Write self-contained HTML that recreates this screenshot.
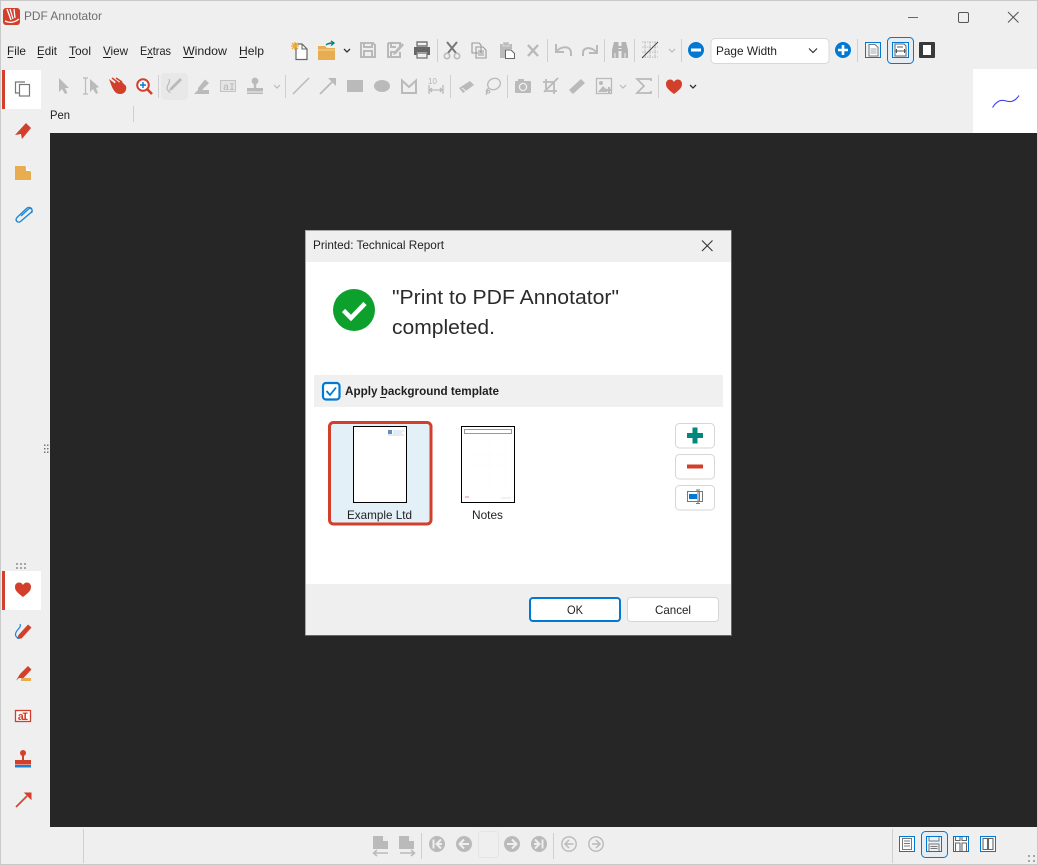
<!DOCTYPE html>
<html lang="en"><head><meta charset="utf-8"><title>PDF Annotator</title>
<style>
html,body{margin:0;padding:0;background:#efefef;width:1038px;height:865px;overflow:hidden}
svg{display:block}
text{font-family:"Liberation Sans",sans-serif;fill:#1f1f1f;font-size:12px}
</style></head><body>
<svg width="1038" height="865" viewBox="0 0 1038 865" xmlns="http://www.w3.org/2000/svg">
<rect width="1038" height="865" fill="#efefef"/>
<path d="M.5 865V.5H1037.500V865" fill="none" stroke="#c9c9c9"/>
<path d="M0 864.500H1038" stroke="#c9c9c9"/>
<rect x="50" y="133" width="987" height="694" fill="#262626"/>
<rect x="973" y="69" width="64" height="64" fill="#fff"/>
<path d="M992.500 107.500C996 102 1000 99.500 1004 100.500C1009 102 1014 103 1019 95.500" fill="none" stroke="#3a3af0" stroke-width="1.100"/>

<!-- title bar -->
<rect x="3" y="8" width="17" height="17" rx="3" fill="#d23f2b"/>
<path d="M7 9L11 20M10 9L13 19M14 9L15 18M5 21C9 23 14 23 19 19" fill="none" stroke="#fff" stroke-width="1.300"/>
<text x="24" y="20" textLength="78" lengthAdjust="spacingAndGlyphs" style="fill:#6e6e6e">PDF Annotator</text>
<path d="M908 17.500H918" stroke="#666"/>
<rect x="958.500" y="12.500" width="10" height="10" rx="1.500" fill="none" stroke="#555"/>
<path d="M1008 12L1018.500 22.500M1018.500 12L1008 22.500" stroke="#555"/>

<!-- menu -->
<g font-size="12">
<text x="7" y="55" textLength="19" lengthAdjust="spacingAndGlyphs">File</text>
<text x="37" y="55" textLength="20" lengthAdjust="spacingAndGlyphs">Edit</text>
<text x="69" y="55" textLength="22" lengthAdjust="spacingAndGlyphs">Tool</text>
<text x="103" y="55" textLength="25" lengthAdjust="spacingAndGlyphs">View</text>
<text x="140" y="55" textLength="31" lengthAdjust="spacingAndGlyphs">Extras</text>
<text x="183" y="55" textLength="44" lengthAdjust="spacingAndGlyphs">Window</text>
<text x="239" y="55" textLength="25" lengthAdjust="spacingAndGlyphs">Help</text>
</g>
<path d="M7.500 57.500H13M37.500 57.500H43M69 57.500H75M103 57.500H111M147 57.500H153M183 57.500H194M239.500 57.500H247" stroke="#1f1f1f"/>

<!-- separators -->
<path d="M437.500 39V62M547.500 39V62M604.500 39V62M634.500 39V62M681.500 39V62M857.500 39V62M158.500 75V98M285.500 75V98M450.500 75V98M507.500 75V98M658.500 75V98M133.500 106V122M83.500 829V863M421.500 833V859M553.500 833V859M892.500 829V863" stroke="#cfcfcf"/>

<!-- row 1 icons -->
<path d="M296 44H302L307 49V59.500H296Z" fill="#fff" stroke="#666" stroke-width="1.200"/>
<path d="M302 44V49H307" fill="none" stroke="#666"/>
<path d="M295 42V50M291 46H299M292 43L298 49M298 43L292 49" stroke="#f0a830" stroke-width="1.300"/>
<path d="M318 46H325L327 48H335V60H318Z" fill="#e8ad50"/>
<path d="M318 50H335" stroke="#f6d49a"/>
<path d="M326 45C328 43 331 43 334 43M331 41L334 43L331 45.500" fill="none" stroke="#00897b" stroke-width="1.400"/>
<path d="M344 49L347 52L350 49" fill="none" stroke="#333" stroke-width="1.300"/>
<g fill="none" stroke="#b9b9b9" stroke-width="2">
<path d="M361 43H373L375 45V57H361Z"/>
<path d="M364 43V47H372V43M364 57V51H372V57"/>
<path d="M388 43H400V46M388 43V57H400V52"/>
<path d="M391 43V47H396M391 57V52H395"/>
</g>
<path d="M394 52L402 43L404 45L396 54L393 55Z" fill="#b9b9b9"/>
<path d="M417 42H427V46H417Z" fill="none" stroke="#777" stroke-width="1.400"/>
<path d="M414 47H430V55H427V52H417V55H414Z" fill="#666"/>
<rect x="417" y="53" width="10" height="5" fill="none" stroke="#777" stroke-width="1.300"/>
<path d="M447 42L456 53M457 42L448 53" stroke="#777" stroke-width="2"/>
<circle cx="447" cy="56" r="2.700" fill="none" stroke="#b9b9b9" stroke-width="1.600"/><circle cx="457" cy="56" r="2.700" fill="none" stroke="#b9b9b9" stroke-width="1.600"/>
<path d="M472 43H479L481 45V53H472ZM476 47H483L486 50V58H476Z" fill="#efefef" stroke="#999" stroke-width="1.100"/>
<path d="M478 51H484M478 53H484M478 55H484" stroke="#999"/>
<path d="M500 44H512V49H505V58H500Z" fill="#bbb"/><rect x="503" y="42" width="6" height="4" fill="#bbb" stroke="#efefef" stroke-width=".6"/>
<path d="M505.500 50H511L514.500 53.500V58.500H505.500Z" fill="#fff" stroke="#666"/>
<path d="M528 45L538 56M538 45L528 56" stroke="#b9b9b9" stroke-width="2.400"/>
<path d="M556 44V52H564M556 52C560 46 571 45 571 53V56" fill="none" stroke="#b9b9b9" stroke-width="2"/>
<path d="M597 45V53H589M597 53C593 47 583 46 583 53V56" fill="none" stroke="#b9b9b9" stroke-width="2"/>
<path d="M612 58V50L614 42H618.500V58H613ZM621.500 58V42H626L628 50V58Z" fill="#b2b2b2"/>
<path d="M615 50H625M618 47H622" stroke="#b2b2b2" stroke-width="2"/>
<path d="M615 58V53M625 58V53" stroke="#efefef"/>
<path d="M642 42H658M642 47H658M642 52H658M642 57H658M645 42V58M650 42V58M655 42V58" stroke="#aaa" stroke-width=".8" stroke-dasharray="1.500 1"/>
<path d="M642 58L658 42" stroke="#444" stroke-width="1"/>
<path d="M669 49L672 52L675 49" fill="none" stroke="#bbb" stroke-width="1.200"/>
<circle cx="696" cy="50" r="8" fill="#0078d4"/><rect x="691" y="48.500" width="10" height="3" fill="#fff"/>
<rect x="711" y="38.500" width="118" height="25" rx="4" fill="#fff" stroke="#d8d8d8"/>
<text x="716" y="55" textLength="61" lengthAdjust="spacingAndGlyphs">Page Width</text>
<path d="M809 48.500L813 52.500L817 48.500" fill="none" stroke="#333" stroke-width="1.200"/>
<circle cx="843" cy="50" r="8" fill="#0078d4"/><path d="M838 50H848M843 45V55" stroke="#fff" stroke-width="2.600"/>
<rect x="865.500" y="42.500" width="15" height="15" fill="#e9f2f9" stroke="#0078d4"/>
<path d="M869 44.500H875L878 47.500V56H869Z" fill="#fff" stroke="#777"/><path d="M870.500 49H876.500M870.500 51H876.500M870.500 53H876.500" stroke="#888" stroke-width=".8"/>
<rect x="887.500" y="37.500" width="26" height="26" rx="4" fill="#e6ecf1" stroke="#0078d4"/>
<rect x="892.500" y="42.500" width="16" height="15" fill="#e9f2f9" stroke="#0078d4"/>
<path d="M895 44H904L906 46V56H895Z" fill="#fff" stroke="#666"/><path d="M895 51H906M896.500 49V53M904.500 49V53M897 47H903" stroke="#555" stroke-width="1"/>
<rect x="919" y="42" width="16" height="16" rx="1" fill="#3a3a3a"/><rect x="923" y="45" width="8" height="10" fill="#fff"/>

<!-- row 2 icons -->
<path d="M59 78L59 92L62 89L65 94L67.500 93L65 88H69Z" fill="#bababa"/>
<path d="M83 78H88M83 94H88M85.500 78V94" stroke="#bababa" stroke-width="1.200"/>
<path d="M90 79V92L93 89L96 94L98 93L96 88L99 87Z" fill="#bababa"/>
<path d="M109 79L115 83.500L116 80.500L119 82.500L121 81L126 86C127 90 125 94 120 94C116 94 114 91 112 87Z" fill="#d23f2b"/>
<path d="M112 78L118 82.500M116 78L122 82" stroke="#d23f2b" stroke-width="1.500"/>
<circle cx="143" cy="85" r="5.800" fill="#fff" stroke="#d23f2b" stroke-width="2"/>
<path d="M147.500 89.500L152 94" stroke="#d23f2b" stroke-width="2.600"/>
<path d="M140 85H146M143 82V88" stroke="#0078d4" stroke-width="1.400"/>
<rect x="161" y="73" width="27" height="27" rx="4" fill="#e8e8e8"/>
<path d="M170 88L180 78L182 80L172 90L169 91Z" fill="#bababa"/>
<path d="M169 79C171 82 167 85 167 88C167 91 170 92 170 93" fill="none" stroke="#bababa" stroke-width="1.200"/>
<path d="M198 88L205 79.500L209 83L202 90H198Z" fill="#bababa"/><path d="M194 94L198 90H209V94Z" fill="#bababa"/>
<rect x="220.500" y="80.500" width="15" height="11" fill="#e4e4e4" stroke="#c4c4c4"/>
<text x="223" y="90" style="fill:#b4b4b4;font-size:10px;font-family:'Liberation Mono',monospace">aI</text>
<circle cx="255" cy="81" r="3.400" fill="#bababa"/><path d="M255 84V88" stroke="#bababa" stroke-width="2.400"/>
<rect x="247" y="88" width="16" height="3.500" fill="#bababa"/><rect x="247" y="92.500" width="16" height="1.500" fill="#bababa"/>
<path d="M274 85L277 88L280 85" fill="none" stroke="#bbb" stroke-width="1.200"/>
<path d="M293 94L309 78" stroke="#bababa" stroke-width="1.500"/>
<path d="M320 94L333 81" stroke="#bababa" stroke-width="1.800"/><path d="M328 78H336V86Z" fill="#bababa"/>
<rect x="347" y="80" width="16" height="12" fill="#bababa"/>
<ellipse cx="382" cy="86" rx="8" ry="6" fill="#bababa"/>
<path d="M402 93V80.500L409 87L416 80.500V93Z" fill="none" stroke="#bababa" stroke-width="2"/>
<text x="428" y="84" style="fill:#b4b4b4;font-size:8px" textLength="9">10</text>
<path d="M429 85V94M443 85V94M430 90H442M432 88L430 90L432 92M440 88L442 90L440 92" fill="none" stroke="#bababa" stroke-width="1.300"/>
<path d="M459 88L470 81L474 85L463 93Z" fill="#bababa"/>
<path d="M462 88L467 92" stroke="#efefef"/>
<ellipse cx="494" cy="84" rx="6.500" ry="5.500" transform="rotate(-25 494 84)" fill="none" stroke="#bababa" stroke-width="1.300"/>
<path d="M489 88C485 90 486 93 488 93C490 93 491 91 488 90L486 95" fill="none" stroke="#bababa" stroke-width="1.200"/>
<rect x="515" y="81" width="16" height="12" rx="1" fill="#bababa"/><rect x="518" y="79" width="6" height="3" fill="#bababa"/>
<circle cx="523" cy="87" r="3.600" fill="#bababa" stroke="#efefef" stroke-width="1.300"/>
<path d="M546 79V91H557M543 82H554V94M544 92L558 78" fill="none" stroke="#bababa" stroke-width="1.800"/>
<path d="M569 90L581 79L585 83L573 94Z" fill="#bababa"/>
<rect x="596.500" y="78.500" width="15" height="15" fill="none" stroke="#bababa" stroke-width="1.300"/>
<circle cx="601" cy="83" r="2" fill="#bababa"/><path d="M598 92L603 86L607 90V92Z" fill="#bababa"/>
<path d="M606 90H612M609 87V93" stroke="#bababa" stroke-width="2.200"/>
<path d="M620 85L623 88L626 85" fill="none" stroke="#bbb" stroke-width="1.200"/>
<path d="M651 81V79H637L644 86L637 93H651V91" fill="none" stroke="#bababa" stroke-width="1.700"/>
<path d="M674 94C669 90 666 88 666 84C666 79 672 78 674 82C676 78 682 79 682 84C682 88 679 90 674 94Z" fill="#d23f2b"/>
<path d="M690 85L693 88L696 85" fill="none" stroke="#333" stroke-width="1.300"/>
<text x="50" y="119" textLength="20" lengthAdjust="spacingAndGlyphs">Pen</text>

<!-- left tabs -->
<rect x="2" y="70" width="39" height="39" fill="#fff"/><rect x="2" y="70" width="3" height="39" fill="#d23f2b"/>
<path d="M25 82H15.500V93H19" fill="none" stroke="#777" stroke-width="1.200"/>
<rect x="19.500" y="84.500" width="10" height="11.500" fill="#fff" stroke="#777" stroke-width="1.200"/>
<path d="M15 135L26 123L31 128L22 139L21 134Z" fill="#d23f2b"/>
<path d="M15 166H25L31 172V180H15Z" fill="#e8ad50"/><path d="M26 166.500V171H30.500Z" fill="#fff"/>
<path d="M21 216L28.500 209C31 207 33.500 210 31 212.500L20.500 221.500C18 223.500 14.500 220.500 17 217.500L26.500 208.500C29.500 205.500 34 209 31.500 213" fill="none" stroke="#1b84d6" stroke-width="1.300"/>
<path d="M44 444.500h1.500v1.500H44zM47 444.500h1.500v1.500H47zM44 448h1.500v1.500H44zM47 448h1.500v1.500H47zM44 451.500h1.500v1.500H44zM47 451.500h1.500v1.500H47z" fill="#777"/>
<path d="M16 563h2v2h-2zM20 563h2v2h-2zM24 563h2v2h-2zM16 567h2v2h-2zM20 567h2v2h-2zM24 567h2v2h-2z" fill="#a5a5a5"/>
<rect x="2" y="571" width="39" height="39" fill="#fff"/><rect x="2" y="571" width="3" height="39" fill="#d23f2b"/>
<path d="M23 597C18 593 15 591 15 587C15 582 21 581 23 585C25 581 31 582 31 587C31 591 28 593 23 597Z" fill="#d23f2b"/>
<path d="M18.500 635L28 624.500L31.500 627.500L21.500 638.500L17 639Z" fill="#d23f2b"/>
<path d="M20 624C22 628 15 630 15.500 635C16 637 17.500 638 19 638.500" fill="none" stroke="#1b84d6" stroke-width="1.200"/>
<path d="M20 674L28 666L31.500 669.500L23.500 678H19L16 680.500Z" fill="#d23f2b"/><rect x="21" y="678" width="10" height="3" fill="#e8ad50"/>
<rect x="15.500" y="710.500" width="15" height="11" fill="#fff" stroke="#d23f2b" stroke-width="1.300"/>
<text x="17.500" y="720" style="fill:#d23f2b;font-size:11px;font-family:'Liberation Mono',monospace;font-weight:bold" textLength="11">aI</text>
<circle cx="23" cy="753" r="3" fill="#d23f2b"/><path d="M23 755V760" stroke="#d23f2b" stroke-width="2"/>
<rect x="15" y="760" width="16" height="4" fill="#d23f2b"/><rect x="15" y="764.500" width="16" height="1.500" fill="#d23f2b"/><rect x="15" y="766" width="16" height="1.500" fill="#1b84d6"/>
<path d="M16 807L27 796" stroke="#d23f2b" stroke-width="1.600"/><path d="M25 793H31V799Z" fill="#d23f2b" stroke="#d23f2b"/>

<!-- dialog -->
<rect x="305" y="230" width="427" height="406" fill="#fff"/>
<path d="M305.500 636V230.500H731" fill="none" stroke="#a8a8a8"/>
<path d="M731.500 230V635.500H305" fill="none" stroke="#666"/>
<rect x="306" y="231" width="425" height="31" fill="#efefef"/>
<rect x="306" y="584" width="425" height="51" fill="#efefef"/>
<text x="313" y="249" textLength="131" lengthAdjust="spacingAndGlyphs">Printed: Technical Report</text>
<path d="M702 240.500L712.500 251M712.500 240.500L702 251" stroke="#333" stroke-width="1.100"/>
<circle cx="354" cy="310" r="21" fill="#0ea02d"/>
<path d="M343.500 310.500L351 318L365 303.500" fill="none" stroke="#fff" stroke-width="4.500"/>
<text x="392" y="304" style="font-size:20px;fill:#2b2b2b" textLength="227" lengthAdjust="spacingAndGlyphs">"Print to PDF Annotator"</text>
<text x="392" y="334" style="font-size:20px;fill:#2b2b2b" textLength="103" lengthAdjust="spacingAndGlyphs">completed.</text>
<rect x="314" y="375" width="409" height="32" fill="#f0f0f0"/>
<rect x="323" y="383" width="16.500" height="16.500" rx="3" fill="#fff" stroke="#0078d4" stroke-width="2.200"/>
<path d="M326.500 391L330 395L336 387.500" fill="none" stroke="#0078d4" stroke-width="1.800"/>
<text x="345" y="395" style="font-weight:bold" textLength="154" lengthAdjust="spacingAndGlyphs">Apply background template</text>
<path d="M380 397.500H386" stroke="#1f1f1f"/>

<rect x="329.500" y="422.500" width="101.500" height="101.500" rx="4" fill="#e3f0f8" stroke="#d23f2b" stroke-width="3"/>
<rect x="353.500" y="426.500" width="53" height="76" fill="#fff" stroke="#000"/>
<path d="M388 430h4v4h-4z" fill="#5f8fbf"/><path d="M393 431h11M393 433h9M388 435h16" stroke="#b7cbe0" stroke-width=".8"/>
<text x="347" y="519" textLength="65" lengthAdjust="spacingAndGlyphs">Example Ltd</text>
<rect x="461.500" y="426.500" width="53" height="76" fill="#fff" stroke="#000"/>
<rect x="464.500" y="429.500" width="47" height="4" fill="#fff" stroke="#999"/>
<path d="M465 496h4v2h-4z" fill="#f3c4c4"/><path d="M501 498h10" stroke="#e5e5e5"/>
<path d="M466 445H510M466 455H510M466 465H510M466 475H510M466 485H510M475 437V493M490 437V493M505 437V493" stroke="#fcfcfc"/>
<text x="472" y="519" textLength="31" lengthAdjust="spacingAndGlyphs">Notes</text>

<rect x="675.500" y="423.500" width="39" height="24.500" rx="4" fill="#fff" stroke="#d6d6d6"/>
<rect x="675.500" y="454.500" width="39" height="24.500" rx="4" fill="#fff" stroke="#d6d6d6"/>
<rect x="675.500" y="485.500" width="39" height="24.500" rx="4" fill="#fff" stroke="#d6d6d6"/>
<path d="M687 435.500H703M695 427.500V443.500" stroke="#00897b" stroke-width="5"/>
<rect x="687" y="464.500" width="16" height="4" fill="#d23f2b"/>
<rect x="687.500" y="491.500" width="12" height="10" fill="#fff" stroke="#777"/>
<rect x="689" y="494" width="8" height="5" fill="#0078d4"/>
<path d="M696 490H700M696 503.500H700M698 490V503.500M700 491.500H702.500V501.500H700" fill="none" stroke="#777" stroke-width="1"/>

<rect x="530" y="598" width="90" height="23" rx="3" fill="#fff" stroke="#0078d4" stroke-width="2"/>
<text x="567" y="614" textLength="16" lengthAdjust="spacingAndGlyphs">OK</text>
<rect x="627.500" y="597.500" width="91" height="24" rx="3.500" fill="#fff" stroke="#d6d6d6"/>
<text x="655" y="614" textLength="36" lengthAdjust="spacingAndGlyphs">Cancel</text>

<!-- bottom nav -->
<path d="M373 836H383L388 841V849H373Z" fill="#bababa"/><path d="M383 836V841H388Z" fill="#efefef"/>
<path d="M388 853H374M377 850L373.500 853L377 856" fill="none" stroke="#bababa" stroke-width="1.500"/>
<path d="M399 836H409L414 841V849H399Z" fill="#bababa"/><path d="M409 836V841H414Z" fill="#efefef"/>
<path d="M400 853H414M411 850L414.500 853L411 856" fill="none" stroke="#bababa" stroke-width="1.500"/>
<circle cx="437" cy="844" r="8" fill="#bababa"/><path d="M433.500 839.500V848.500M441 839.500L436.500 844L441 848.500M436.500 844H442" fill="none" stroke="#efefef" stroke-width="2"/>
<circle cx="464" cy="844" r="8" fill="#bababa"/><path d="M464 839.500L459.500 844L464 848.500M460 844H469" fill="none" stroke="#efefef" stroke-width="2"/>
<rect x="478.500" y="831.500" width="20" height="26" rx="3" fill="#efefef" stroke="#e4e4e4"/>
<circle cx="512" cy="844" r="8" fill="#bababa"/><path d="M512 839.500L516.500 844L512 848.500M507 844H516" fill="none" stroke="#efefef" stroke-width="2"/>
<circle cx="539" cy="844" r="8" fill="#bababa"/><path d="M542.500 839.500V848.500M535 839.500L539.500 844L535 848.500M534 844H539.500" fill="none" stroke="#efefef" stroke-width="2"/>
<circle cx="569" cy="844" r="7.200" fill="none" stroke="#bababa" stroke-width="1.400"/><path d="M569 840L565 844L569 848M565.500 844H573.500" fill="none" stroke="#bababa" stroke-width="1.500"/>
<circle cx="596" cy="844" r="7.200" fill="none" stroke="#bababa" stroke-width="1.400"/><path d="M596 840L600 844L596 848M592 844H600" fill="none" stroke="#bababa" stroke-width="1.500"/>

<rect x="899.500" y="836.500" width="15" height="15" fill="#fff" stroke="#0078d4"/>
<path d="M902.500 838.500H911.500V849.500H902.500ZM904 841H910M904 843.500H910M904 846H910" fill="none" stroke="#777"/>
<rect x="921.500" y="831.500" width="26" height="26" rx="4" fill="#e6ecf1" stroke="#0078d4"/>
<rect x="926.500" y="836.500" width="15" height="15" fill="#e9f2f9" stroke="#0078d4"/>
<path d="M929 837V841H939V837M929 851V844H939V851M930.500 846.500H937.500M930.500 848.500H937.500" fill="none" stroke="#777"/>
<rect x="953.500" y="836.500" width="15" height="15" fill="#fff" stroke="#0078d4"/>
<path d="M955.500 837V840.500H960V837M962 837V840.500H966.500V837M955.500 851V843H960V851M962 851V843H966.500V851" fill="none" stroke="#666" stroke-width="1.100"/>
<rect x="980.500" y="836.500" width="15" height="15" fill="#fff" stroke="#0078d4"/>
<path d="M983 838.500H987.500V849.500H983ZM988.500 838.500H993V849.500H988.500Z" fill="none" stroke="#666" stroke-width="1.100"/>
<path d="M1028 855h2v2h-2zM1033 855h2v2h-2zM1028 860h2v2h-2zM1033 860h2v2h-2z" fill="#a5a5a5"/>
</svg>
</body></html>
